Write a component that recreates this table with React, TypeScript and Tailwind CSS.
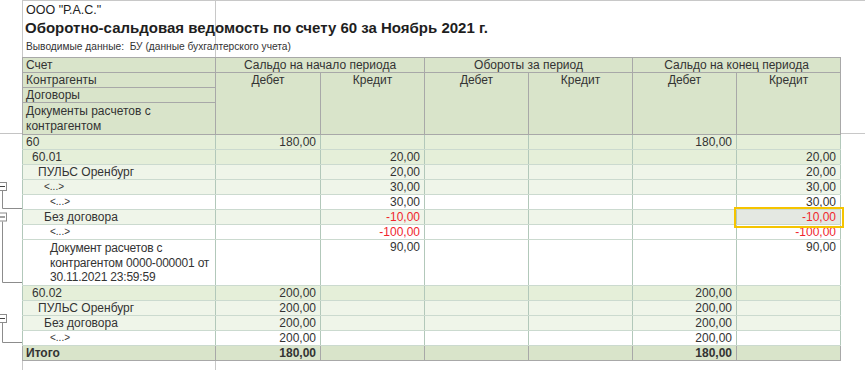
const GREEN1 = "bg-[#e5efd9]";
const GREEN2 = "bg-[#eff5e9]";
const WHITE = "bg-white";

type Row = {
  label: string;
  level: number;
  bg: string;
  cells: string[];
  tall?: boolean;
  sel?: number;
  small?: boolean;
};

const ROWS: Row[] = [
  { label: "60", level: 0, bg: GREEN1, cells: ["180,00", "", "", "", "180,00", ""] },
  { label: "60.01", level: 1, bg: GREEN1, cells: ["", "20,00", "", "", "", "20,00"] },
  { label: "ПУЛЬС Оренбург", level: 2, bg: GREEN2, cells: ["", "20,00", "", "", "", "20,00"] },
  { label: "<...>", level: 3, bg: GREEN2, small: true, cells: ["", "30,00", "", "", "", "30,00"] },
  { label: "<...>", level: 4, bg: WHITE, small: true, cells: ["", "30,00", "", "", "", "30,00"] },
  { label: "Без договора", level: 3, bg: GREEN2, sel: 5, cells: ["", "-10,00", "", "", "", "-10,00"] },
  { label: "<...>", level: 4, bg: WHITE, small: true, cells: ["", "-100,00", "", "", "", "-100,00"] },
  {
    label: "Документ расчетов с контрагентом 0000-000001 от 30.11.2021 23:59:59",
    level: 4,
    bg: WHITE,
    tall: true,
    cells: ["", "90,00", "", "", "", "90,00"],
  },
  { label: "60.02", level: 1, bg: GREEN1, cells: ["200,00", "", "", "", "200,00", ""] },
  { label: "ПУЛЬС Оренбург", level: 2, bg: GREEN2, cells: ["200,00", "", "", "", "200,00", ""] },
  { label: "Без договора", level: 3, bg: GREEN2, cells: ["200,00", "", "", "", "200,00", ""] },
  { label: "<...>", level: 4, bg: WHITE, small: true, cells: ["200,00", "", "", "", "200,00", ""] },
];

const INDENT = ["pl-[3px]", "pl-[9px]", "pl-[15px]", "pl-[21px]", "pl-[27px]"];

const HEAD = "border border-[#a8a8a8] bg-[#d9e4ca] font-normal p-0";
const CELL = "border-x border-x-[#b2c8ba] border-b border-b-[#cbdacf] p-0 leading-[14px] align-top";

function TreeGutter() {
  // grouping brackets drawn in the left margin
  const groups = [
    { box: 187, end: 208.5 },
    { box: 217.5, end: 282.5 },
    { box: 319, end: 342.5 },
  ];
  return (
    <svg width="22" height="370" className="shrink-0">
      <line x1="0" y1="133.5" x2="22" y2="133.5" stroke="#c4c4c4" />
      {groups.map((g) => (
        <g key={g.box}>
          <line x1="2.5" y1={g.box + 4} x2="2.5" y2={g.end} stroke="#8c8c8c" />
          <line x1="2.5" y1={g.end} x2="22" y2={g.end} stroke="#8c8c8c" />
          <rect x="-2.5" y={g.box - 4.5} width="9" height="8" fill="white" stroke="#8c8c8c" />
          <line x1="0" y1={g.box - 0.5} x2="5" y2={g.box - 0.5} stroke="#444" />
        </g>
      ))}
    </svg>
  );
}

export default function App() {
  return (
    <div className="flex w-[865px] h-[370px] overflow-hidden bg-white font-['Liberation_Sans',Arial,sans-serif] text-[12px] text-[#333]">
      <TreeGutter />
      <div className="flex-1 flex flex-col border-t border-[#c8c8c8]">
        <div className="flex h-[56px] shrink-0">
          <div className="w-[194px] shrink-0 border-x border-[#c8c8c8] whitespace-nowrap">
            <div className="pl-[3px] pt-[2px] leading-[14px] text-[12.5px] text-[#222]">ООО "Р.А.С."</div>
            <div className="pl-[2px] mt-px leading-[20px] text-[15px] font-bold text-[#1e1e1e]">
              Оборотно-сальдовая ведомость по счету 60 за Ноябрь 2021 г.
            </div>
            <div className="pl-[3px] mt-[2px] leading-[14px] text-[10.2px] text-[#333] whitespace-pre">
              Выводимые данные:  БУ (данные бухгалтерского учета)
            </div>
          </div>
        </div>

        <div className="flex shrink-0">
          <table className="table-fixed border-collapse w-[818px] shrink-0">
            <colgroup>
              <col className="w-[193px]" />
              <col className="w-[105px]" />
              <col className="w-[104px]" />
              <col className="w-[104px]" />
              <col className="w-[104px]" />
              <col className="w-[104px]" />
              <col className="w-[104px]" />
            </colgroup>
            <thead>
              <tr className="h-[15px] leading-[14px]">
                <th className={`${HEAD} text-left pl-[3px]`}>Счет</th>
                <th colSpan={2} className={HEAD}>Сальдо на начало периода</th>
                <th colSpan={2} className={HEAD}>Обороты за период</th>
                <th colSpan={2} className={HEAD}>Сальдо на конец периода</th>
              </tr>
              <tr className="h-[15px] leading-[14px]">
                <th className={`${HEAD} text-left pl-[3px]`}>Контрагенты</th>
                {["Дебет", "Кредит", "Дебет", "Кредит", "Дебет", "Кредит"].map((h, i) => (
                  <th key={i} rowSpan={3} className={`${HEAD} align-top`}>
                    {h}
                  </th>
                ))}
              </tr>
              <tr className="h-[15px] leading-[14px]">
                <th className={`${HEAD} text-left pl-[3px]`}>Договоры</th>
              </tr>
              <tr className="h-[32px] leading-[15px]">
                <th className={`${HEAD} text-left pl-[3px] pt-px`}>
                  Документы расчетов с
                  <br />
                  контрагентом
                </th>
              </tr>
            </thead>
            <tbody>
              {ROWS.map((r, i) => (
                <tr key={i} className={`${r.bg} ${r.tall ? "h-[43px]" : "h-[15px]"}`}>
                  <td className={`${CELL} ${INDENT[r.level]} ${i === 0 ? "border-t border-t-[#a8a8a8]" : ""}`}>
                    {r.tall ? (
                      <div className="leading-[14.5px] tracking-[-0.2px] pt-px">{r.label}</div>
                    ) : r.small ? (
                      <div className="text-[10px] leading-[14px]">{r.label}</div>
                    ) : (
                      r.label
                    )}
                  </td>
                  {r.cells.map((c, j) => (
                    <td
                      key={j}
                      className={`${CELL} text-right pr-[4px] ${c.startsWith("-") ? "text-[#f0262d]" : ""} ${
                        r.sel === j ? "bg-[#e4e8e2] outline-2 outline-offset-1 outline-[#f5c400]" : ""
                      }`}
                    >
                      {c}
                    </td>
                  ))}
                </tr>
              ))}
              <tr className="h-[15px] bg-[#d9e4ca] font-bold">
                <td className="border border-[#a8a8a8] p-0 pl-[3px] leading-[14px]">Итого</td>
                {["180,00", "", "", "", "180,00", ""].map((c, j) => (
                  <td key={j} className="border border-[#a8a8a8] p-0 pr-[4px] text-right leading-[14px]">
                    {c}
                  </td>
                ))}
              </tr>
            </tbody>
          </table>
          <div className="flex-1">
            <div className="h-[77px] border-b border-[#c8c8c8]" />
          </div>
        </div>

        <div className="flex flex-1">
          <div className="w-[194px] shrink-0 border-x border-[#c8c8c8]" />
        </div>
      </div>
    </div>
  );
}
